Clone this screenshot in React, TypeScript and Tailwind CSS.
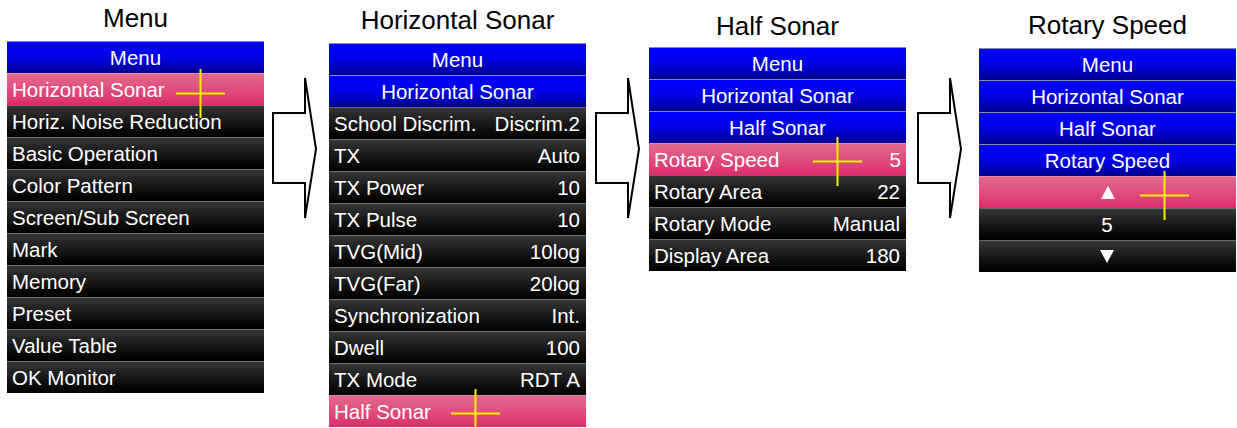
import React from "react";

type RowKind = "blue" | "pink" | "dark";

const rowBase =
  "h-[32px] flex items-center text-white text-[20.5px] leading-[32px] border-t whitespace-nowrap";

const kindCls: Record<RowKind, string> = {
  blue: "bg-gradient-to-b from-[#0000ff] via-[#0000e6] to-[#000090] border-[#8585b8] justify-center",
  pink: "bg-gradient-to-b from-[#e2688e] to-[#dc2a6c] border-[#e88aa8] px-[5px] justify-between",
  dark: "bg-gradient-to-b from-[#363636] to-[#020202] border-[#6a6a6a] pl-[5px] pr-[6px] justify-between",
};

function Row({
  kind,
  label,
  value,
  center,
}: {
  kind: RowKind;
  label: React.ReactNode;
  value?: string;
  center?: boolean;
}) {
  return (
    <div className={`${rowBase} ${kindCls[kind]} ${center ? "justify-center" : ""}`}>
      <span>{label}</span>
      {value !== undefined && <span>{value}</span>}
    </div>
  );
}

function Cross({ left, top }: { left: number; top: number }) {
  return (
    <svg
      className="absolute pointer-events-none"
      style={{ left, top }}
      width={49}
      height={49}
      viewBox="0 0 49 49"
    >
      <line x1="0" y1="24.5" x2="49" y2="24.5" stroke="#f5f000" strokeWidth="2" />
      <line x1="24.5" y1="0" x2="24.5" y2="49" stroke="#f5f000" strokeWidth="2" />
    </svg>
  );
}

function Arrow() {
  return (
    <svg width={45} height={142} viewBox="0 0 45 142" className="shrink-0 mt-[77px]">
      <polygon
        points="1,36 33,36 33,1 44,72 33,141 33,106 1,106"
        fill="white"
        stroke="black"
        strokeWidth="2"
        strokeLinejoin="miter"
      />
    </svg>
  );
}

function Tri({ up }: { up?: boolean }) {
  return (
    <svg width={14} height={13} viewBox="0 0 14 13">
      {up ? <polygon points="7,0 14,13 0,13" fill="white" /> : <polygon points="0,0 14,0 7,13" fill="white" />}
    </svg>
  );
}

const title = "text-[26px] leading-[30px] h-[30px] text-center text-black whitespace-nowrap";

export default function App() {
  return (
    <div
      className="w-[1237px] h-[428px] bg-white flex items-start overflow-hidden"
      style={{ fontFamily: '"Liberation Sans", Arial, sans-serif' }}
    >
      {/* Column 1 */}
      <div className="w-[257px] ml-[7px] shrink-0 pt-[3px]">
        <div className={title}>Menu</div>
        <div className="relative mt-[8px] border-t border-[#8c8c8c]">
          <div className="-mt-px">
            <Row kind="blue" label="Menu" />
            <Row kind="pink" label="Horizontal Sonar" />
            <Row kind="dark" label="Horiz. Noise Reduction" />
            <Row kind="dark" label="Basic Operation" />
            <Row kind="dark" label="Color Pattern" />
            <Row kind="dark" label="Screen/Sub Screen" />
            <Row kind="dark" label="Mark" />
            <Row kind="dark" label="Memory" />
            <Row kind="dark" label="Preset" />
            <Row kind="dark" label="Value Table" />
            <Row kind="dark" label="OK Monitor" />
          </div>
          <Cross left={169} top={27} />
        </div>
      </div>

      <div className="ml-[8px]">
        <Arrow />
      </div>

      {/* Column 2 */}
      <div className="w-[257px] ml-[12px] shrink-0 pt-[5px]">
        <div className={title}>Horizontal Sonar</div>
        <div className="relative mt-[8px]">
          <Row kind="blue" label="Menu" />
          <Row kind="blue" label="Horizontal Sonar" />
          <Row kind="dark" label="School Discrim." value="Discrim.2" />
          <Row kind="dark" label="TX" value="Auto" />
          <Row kind="dark" label="TX Power" value="10" />
          <Row kind="dark" label="TX Pulse" value="10" />
          <Row kind="dark" label="TVG(Mid)" value="10log" />
          <Row kind="dark" label="TVG(Far)" value="20log" />
          <Row kind="dark" label="Synchronization" value="Int." />
          <Row kind="dark" label="Dwell" value="100" />
          <Row kind="dark" label="TX Mode" value="RDT A" />
          <Row kind="pink" label="Half Sonar" />
          <Cross left={122} top={346} />
        </div>
      </div>

      <div className="ml-[9px]">
        <Arrow />
      </div>

      {/* Column 3 */}
      <div className="w-[257px] ml-[9px] shrink-0 pt-[11px]">
        <div className={title}>Half Sonar</div>
        <div className="relative mt-[6px]">
          <Row kind="blue" label="Menu" />
          <Row kind="blue" label="Horizontal Sonar" />
          <Row kind="blue" label="Half Sonar" />
          <Row kind="pink" label="Rotary Speed" value="5" />
          <Row kind="dark" label="Rotary Area" value="22" />
          <Row kind="dark" label="Rotary Mode" value="Manual" />
          <Row kind="dark" label="Display Area" value="180" />
          <Cross left={164} top={90} />
        </div>
      </div>

      <div className="ml-[11px]">
        <Arrow />
      </div>

      {/* Column 4 */}
      <div className="w-[257px] ml-[17px] shrink-0 pt-[10px]">
        <div className={title}>Rotary Speed</div>
        <div className="relative mt-[8px]">
          <Row kind="blue" label="Menu" />
          <Row kind="blue" label="Horizontal Sonar" />
          <Row kind="blue" label="Half Sonar" />
          <Row kind="blue" label="Rotary Speed" />
          <Row kind="pink" label={<Tri up />} center />
          <Row kind="dark" label="5" center />
          <Row kind="dark" label={<Tri />} center />
          <Cross left={161} top={123} />
        </div>
      </div>
    </div>
  );
}
